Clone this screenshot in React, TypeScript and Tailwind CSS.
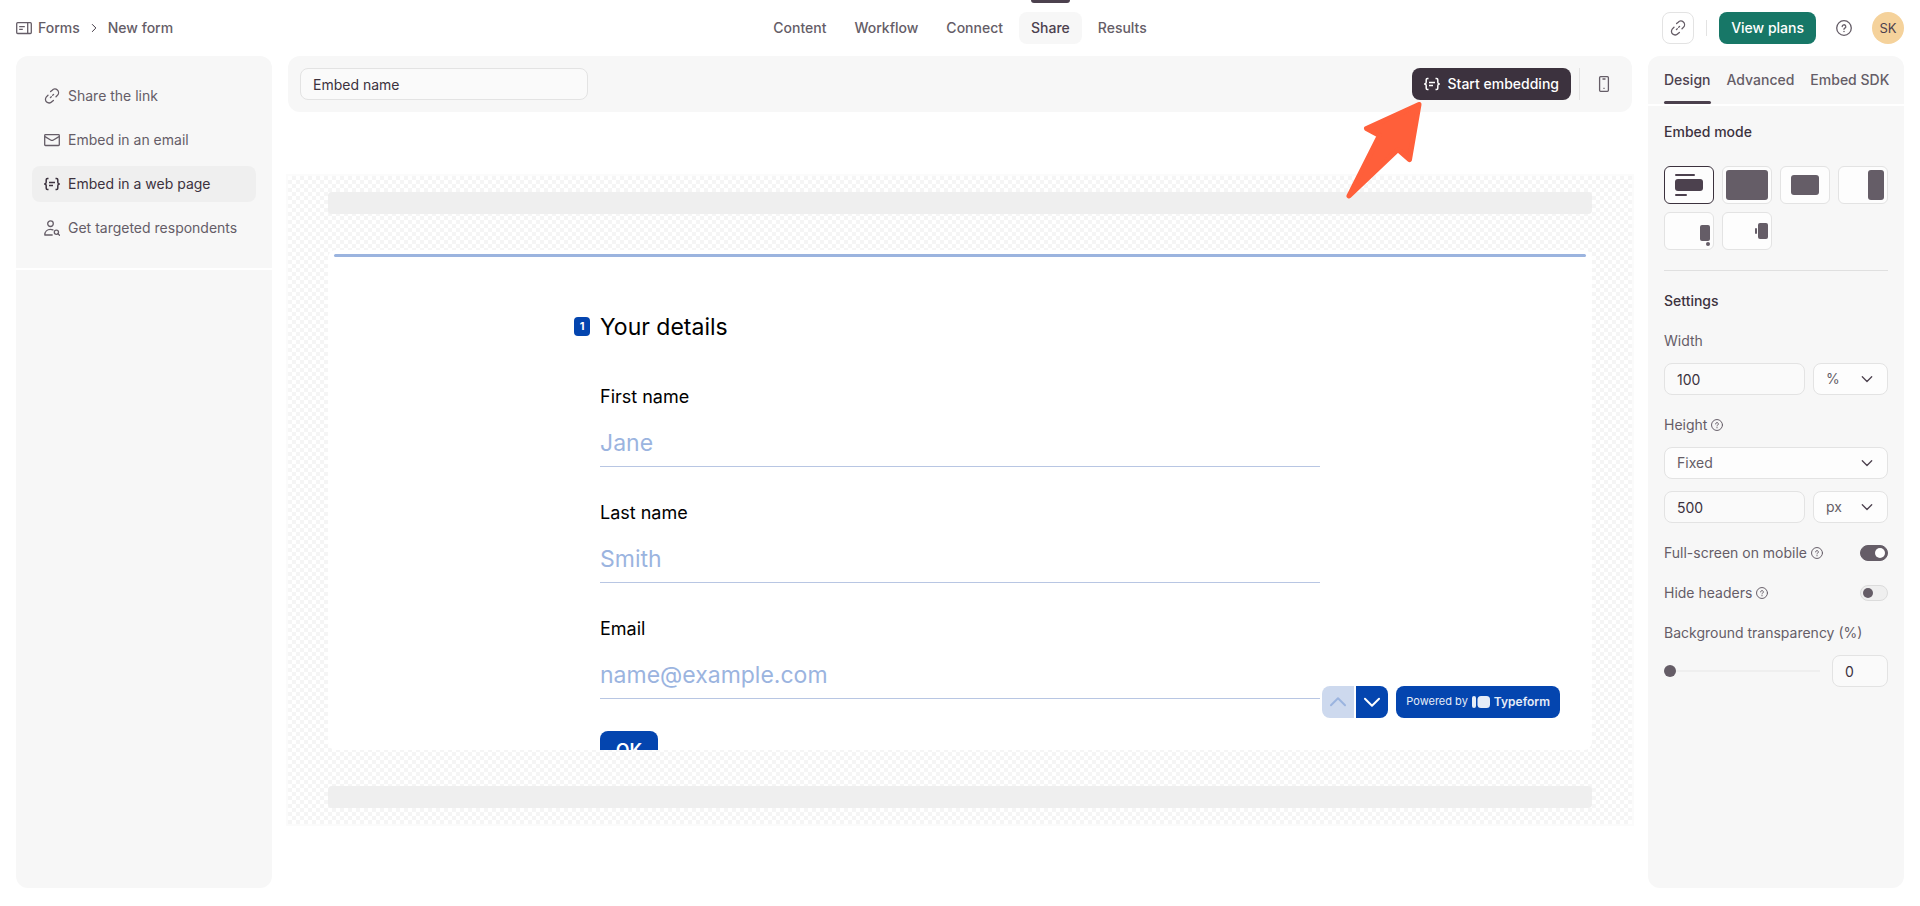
import { ReactNode, useState } from "react";

type IconProps = { className?: string };

function LinkIcon({ className = "size-4" }: IconProps) {
  return (
    <svg className={className} viewBox="0 0 16 16" fill="none" stroke="currentColor" strokeWidth="1.3" strokeLinecap="round">
      <path d="M6.6 3.6 8.2 2.2a3.6 3.6 0 0 1 5.4 4.9L12 8.8" />
      <path d="M9.4 12.4 7.8 13.8a3.6 3.6 0 0 1-5.4-4.9L4 7.2" />
      <path d="m9.6 6.4-.9.9M7.3 8.7l-.9.9" />
    </svg>
  );
}

function MailIcon({ className = "size-4" }: IconProps) {
  return (
    <svg className={className} viewBox="0 0 16 16" fill="none" stroke="currentColor" strokeWidth="1.3" strokeLinejoin="round">
      <rect x="0.7" y="2.7" width="14.6" height="10.8" rx="0.8" />
      <path d="M1 4.6 6.6 8a2.7 2.7 0 0 0 2.8 0L15 4.6" />
    </svg>
  );
}

function EmbedIcon({ className = "size-4" }: IconProps) {
  return (
    <svg className={className} viewBox="0 0 16 16" fill="none" stroke="currentColor" strokeWidth="1.5" strokeLinejoin="round">
      <path d="M4.500 2.500H3.400c-.7 0-1.200.5-1.200 1.200v2.600c0 1-.5 1.700-1.700 1.700 1.200 0 1.700.7 1.700 1.700v2.600c0 .7.5 1.200 1.200 1.200h1.100" />
      <path d="M11.500 2.500h1.100c.7 0 1.200.5 1.200 1.200v2.600c0 1 .5 1.700 1.700 1.700-1.200 0-1.700.7-1.700 1.700v2.600c0 .7-.5 1.200-1.200 1.200h-1.100" />
      <path d="M5 6.500h6M5 9.500h4" />
    </svg>
  );
}

function PeopleIcon({ className = "size-4" }: IconProps) {
  return (
    <svg className={className} viewBox="0 0 16 16" fill="none" stroke="currentColor" strokeWidth="1.3" strokeLinecap="round" strokeLinejoin="round">
      <circle cx="6.5" cy="3.7" r="2.8" />
      <path d="M8.2 15H.8c0-3.3 2.4-5.6 5.7-5.6.9 0 1.7.2 2.4.5" />
      <circle cx="12.4" cy="12.2" r="2.1" />
      <path d="m14 13.8 1.5 1.5" />
    </svg>
  );
}

function FormsIcon({ className = "size-4" }: IconProps) {
  return (
    <svg className={className} viewBox="0 0 16 16" fill="none" stroke="currentColor" strokeWidth="1.3">
      <rect x="0.7" y="2.7" width="14.6" height="10.8" rx="1" />
      <path d="M11.7 2.7v10.8M3.2 6.7h5.6M3.2 9.3h3.6" />
    </svg>
  );
}

function HelpIcon({ className = "size-4" }: IconProps) {
  return (
    <svg className={className} viewBox="0 0 16 16" fill="none" stroke="currentColor" strokeWidth="1.3" strokeLinecap="round">
      <circle cx="8" cy="8" r="7.3" />
      <path d="M6.2 6.6a1.8 1.8 0 1 1 2.7 1.5c-.6.4-.9.6-.9 1.2" />
      <path d="M8 11.5v.1" strokeWidth="1.5" />
    </svg>
  );
}

function PhoneIcon({ className = "size-4" }: IconProps) {
  return (
    <svg className={className} viewBox="0 0 16 16" fill="none" stroke="currentColor" strokeWidth="1.3">
      <rect x="3.6" y="0.7" width="8.8" height="14.6" rx="1" />
      <path d="M6.5 3h3M7.4 12.3h1.2" />
    </svg>
  );
}

function Chevron({ className = "size-4" }: IconProps) {
  return (
    <svg className={className} viewBox="0 0 16 16" fill="none" stroke="currentColor" strokeWidth="1.3" strokeLinecap="round" strokeLinejoin="round">
      <path d="M3.3 5.8 8 10.5l4.7-4.7" />
    </svg>
  );
}

const navItems = ["Content", "Workflow", "Connect", "Share", "Results"];

const shareOptions = [
  { label: "Share the link", icon: LinkIcon },
  { label: "Embed in an email", icon: MailIcon },
  { label: "Embed in a web page", icon: EmbedIcon },
  { label: "Get targeted respondents", icon: PeopleIcon },
];

const fields = [
  { id: "first-name", label: "First name", placeholder: "Jane", type: "text" },
  { id: "last-name", label: "Last name", placeholder: "Smith", type: "text" },
  { id: "email", label: "Email", placeholder: "name@example.com", type: "email" },
];

const embedModes = [
  {
    name: "Standard",
    art: (
      <g fill="#4c414e">
        <rect x="10" y="7" width="20" height="2" rx="1" />
        <rect x="10" y="12" width="28" height="12" rx="3" />
        <rect x="10" y="27" width="12" height="2" rx="1" />
      </g>
    ),
  },
  { name: "Full-page", art: <rect x="3" y="3" width="42" height="30" rx="3" /> },
  { name: "Popup", art: <rect x="10" y="8" width="28" height="20" rx="3" /> },
  { name: "Slider", art: <rect x="29" y="3" width="16" height="30" rx="3" /> },
  {
    name: "Popover",
    art: (
      <>
        <rect x="35" y="12" width="10" height="16" rx="2" />
        <circle cx="43" cy="31" r="2" />
      </>
    ),
  },
  {
    name: "Side tab",
    art: (
      <>
        <rect x="32" y="15" width="2" height="6" rx="1" />
        <rect x="35" y="10" width="10" height="16" rx="2" />
      </>
    ),
  },
];

const inputStyle =
  "h-8 w-full min-w-0 rounded-lg border border-[#e3e3e3] bg-[#fafafa] px-3 text-sm text-[#3c323e] outline-none";

function Select({ label, id, options, className = "" }: { label: string; id: string; options: string[]; className?: string }) {
  return (
    <div className={`relative ${className}`}>
      <select
        id={id}
        aria-label={label}
        className="h-8 w-full appearance-none rounded-lg border border-[#e3e3e3] bg-[#fdfdfd] px-3 text-sm text-[#655d67] outline-none"
      >
        {options.map((option) => (
          <option key={option}>{option}</option>
        ))}
      </select>
      <Chevron className="pointer-events-none absolute top-2 right-[13px] size-4 text-[#4c414e]" />
    </div>
  );
}

function Toggle({ label, defaultChecked = false }: { label: string; defaultChecked?: boolean }) {
  return (
    <label className="flex h-4 items-center justify-between">
      <span className="flex items-center gap-1">
        {label}
        <HelpIcon className="size-3" />
      </span>
      <input type="checkbox" role="switch" defaultChecked={defaultChecked} className="peer sr-only" />
      <span className="flex h-4 w-7 items-center rounded-full border border-[#dcdcdc] bg-[#efefef] px-0.5 peer-checked:justify-end peer-checked:border-[#655d67] peer-checked:bg-[#655d67] peer-checked:*:bg-white">
        <span className="size-2.5 rounded-full bg-[#655d67]" />
      </span>
    </label>
  );
}

function Header() {
  return (
    <header className="flex h-14 shrink-0 items-center px-4 font-medium">
      <nav aria-label="Breadcrumb" className="flex flex-1 items-center gap-1.5">
        <FormsIcon />
        <a href="#forms">Forms</a>
        <Chevron className="mx-0.5 size-3 -rotate-90 text-[#3c323e]" />
        <a href="#new-form">New form</a>
      </nav>

      <nav aria-label="Form" className="flex h-full items-center gap-1">
        {navItems.map((item) => (
          <a
            key={item}
            href={`#${item.toLowerCase()}`}
            className={`relative flex h-8 items-center rounded-lg px-3 ${
              item === "Share" ? "bg-[#f7f7f7] text-[#4c414e]" : ""
            }`}
          >
            {item}
            {item === "Share" && <span className="absolute inset-x-3 -top-3 h-[3px] rounded-b-sm bg-[#4c414e]" />}
          </a>
        ))}
      </nav>

      <div className="flex flex-1 items-center justify-end gap-3">
        <button aria-label="Copy link" className="flex size-8 items-center justify-center rounded-lg border border-[#e3e3e3]">
          <LinkIcon />
        </button>
        <span className="h-4 w-px bg-[#e3e3e3]" />
        <button className="h-8 rounded-lg bg-[#177767] px-3 text-white">View plans</button>
        <button aria-label="Help" className="flex size-8 items-center justify-center">
          <HelpIcon />
        </button>
        <button aria-label="Account" className="size-8 rounded-full bg-[#f5d29b] text-[13px] font-normal text-[#4c414e]">
          SK
        </button>
      </div>
    </header>
  );
}

function Sidebar() {
  return (
    <aside className="flex w-64 shrink-0 flex-col gap-0.5">
      <nav aria-label="Share options" className="flex h-53 flex-col gap-2 rounded-t-xl bg-[#f7f7f7] px-4 pt-[22px]">
        {shareOptions.map(({ label, icon: Icon }, index) => (
          <a
            key={label}
            href="#share"
            className={`flex h-9 shrink-0 items-center gap-2 rounded-lg px-3 ${
              index === 2 ? "bg-[#efefef] text-[#3c323e]" : ""
            }`}
          >
            <Icon />
            {label}
          </a>
        ))}
      </nav>
      <div className="flex-1 rounded-b-xl bg-[#f7f7f7]" />
    </aside>
  );
}

function FormPreview() {
  return (
    <div className="relative h-[500px] overflow-hidden rounded-lg bg-white px-1.5 pt-1 text-black">
      <div className="h-[3px] rounded-full bg-[#9bb4df]" />
      <form className="mx-auto flex w-full max-w-[720px] flex-col pt-13" onSubmit={(e) => e.preventDefault()}>
        <div className="relative">
          <span className="absolute top-2 right-full mr-2.5 flex h-[19px] w-4 items-center justify-center rounded bg-[#0445af] text-[11px] font-bold text-white">
            1
          </span>
          <h1 className="text-[23px] leading-9">Your details</h1>
        </div>
        <div className="mt-[38px] flex flex-col gap-8">
          {fields.map((field) => (
            <div key={field.id}>
              <label htmlFor={field.id} className="block text-lg leading-7">
                {field.label}
              </label>
              <input
                id={field.id}
                type={field.type}
                placeholder={field.placeholder}
                className="mt-2 block h-12 w-full border-b border-[#b8c6e3] bg-transparent text-[23px] outline-none placeholder:text-[#9bb4df]"
              />
            </div>
          ))}
        </div>
        <button className="mt-8 h-10 w-[58px] shrink-0 rounded-lg bg-[#0445af] text-lg font-semibold text-white">OK</button>
      </form>

      <div className="absolute right-8 bottom-8 flex gap-2 text-white">
        <div className="flex gap-0.5 bg-white">
          <button aria-label="Previous question" disabled className="flex size-8 items-center justify-center rounded-l-lg bg-[#cdd9ee] text-[#9bb4df]">
            <Chevron className="size-6 rotate-180" />
          </button>
          <button aria-label="Next question" className="flex size-8 items-center justify-center rounded-r-lg bg-[#0445af]">
            <Chevron className="size-6" />
          </button>
        </div>
        <a href="#typeform" className="flex h-8 items-center gap-1 rounded-lg bg-[#0445af] px-2.5 text-[11px] text-[#e6ecf7]">
          Powered by
          <svg className="h-3 w-[18px]" viewBox="0 0 18 12" fill="currentColor">
            <rect width="4" height="12" rx="2" />
            <rect x="5.5" width="12.5" height="12" rx="3.5" />
          </svg>
          <span className="text-xs font-semibold">Typeform</span>
        </a>
      </div>
    </div>
  );
}

function Preview() {
  return (
    <main className="min-w-0 flex-1">
      <div className="flex h-14 items-center justify-between rounded-xl bg-[#f7f7f7] px-3">
        <input aria-label="Embed name" defaultValue="Embed name" className="h-8 w-72 rounded-lg border border-[#e3e3e3] bg-[#fafafa] px-3 text-[#3c323e] outline-none" />
        <div className="relative flex items-center gap-2">
          <button className="flex h-8 items-center gap-2 rounded-lg bg-[#3c323e] px-3 font-medium text-white">
            <EmbedIcon />
            Start embedding
          </button>
          <span className="h-8 w-px bg-[#e3e3e3]" />
          <button aria-label="Mobile preview" className="flex size-8 items-center justify-center">
            <PhoneIcon />
          </button>
          <svg
            className="pointer-events-none absolute top-8 right-49 h-[100px] w-20"
            viewBox="0 0 80 100"
            fill="#ff5f3a"
            stroke="#ff5f3a"
            strokeWidth="5"
            strokeLinejoin="round"
          >
            <path d="M75 4.5 22.5 28.5 35.5 35.5 5 96 54 49.5 65.5 59.5Z" />
          </svg>
        </div>
      </div>

      <div className="-mx-0.5 mt-[62px] border-2 border-[#fbfbfb] bg-[repeating-conic-gradient(#f5f5f5_0_25%,#ffffff_0_50%)] bg-size-[8px_8px] px-10 py-4">
        <div className="h-[22px] rounded bg-[#efefef]" />
        <div className="my-9">
          <FormPreview />
        </div>
        <div className="h-[22px] rounded bg-[#efefef]" />
      </div>
    </main>
  );
}

function Section({ title, children }: { title: string; children: ReactNode }) {
  return (
    <section>
      <h2 className="font-medium text-[#3c323e]">{title}</h2>
      {children}
    </section>
  );
}

function SettingsPanel() {
  const [mode, setMode] = useState("Standard");

  return (
    <aside className="flex w-64 shrink-0 flex-col gap-0.5">
      <div role="tablist" className="flex h-12 gap-4 rounded-t-xl bg-[#f7f7f7] px-4 font-medium whitespace-nowrap">
        <button role="tab" aria-selected="true" className="relative text-[#4c414e]">
          Design
          <span className="absolute inset-x-0 bottom-0 h-[3px] rounded-full bg-[#4c414e]" />
        </button>
        <button role="tab">Advanced</button>
        <button role="tab">Embed SDK</button>
      </div>

      <div className="flex-1 rounded-b-xl bg-[#f7f7f7] px-4 pt-4">
        <Section title="Embed mode">
          <div className="mt-6 grid grid-cols-4 gap-2">
            {embedModes.map(({ name, art }) => (
              <button
                key={name}
                aria-label={name}
                onClick={() => setMode(name)}
                className={`h-[38px] rounded-md border bg-[#fdfdfd] ${mode === name ? "border-[#3c323e]" : "border-[#e3e3e3]"}`}
              >
                <svg className="mx-auto h-9 w-12" viewBox="0 0 48 36" fill="#655d67">
                  {art}
                </svg>
              </button>
            ))}
          </div>
        </Section>

        <hr className="my-5 border-[#e0e0e0]" />

        <Section title="Settings">
          <label htmlFor="width" className="mt-5 block">
            Width
          </label>
          <div className="mt-3 flex gap-2">
            <input id="width" defaultValue="100" className={inputStyle} />
            <Select id="width-unit" label="Width unit" options={["%", "px"]} className="w-[75px] shrink-0" />
          </div>

          <label htmlFor="height-mode" className="mt-5 flex items-center gap-1">
            Height
            <HelpIcon className="size-3" />
          </label>
          <Select id="height-mode" label="Height" options={["Fixed", "Dynamic"]} className="mt-3" />
          <div className="mt-3 flex gap-2">
            <input aria-label="Height value" defaultValue="500" className={inputStyle} />
            <Select id="height-unit" label="Height unit" options={["px", "%"]} className="w-[75px] shrink-0" />
          </div>

          <div className="mt-[22px] flex flex-col gap-6">
            <Toggle label="Full-screen on mobile" defaultChecked />
            <Toggle label="Hide headers" />
          </div>

          <label htmlFor="transparency" className="mt-[22px] block">
            Background transparency (%)
          </label>
          <div className="mt-3 flex items-center gap-3">
            <input
              id="transparency"
              type="range"
              defaultValue="0"
              className="h-3 min-w-0 flex-1 appearance-none bg-transparent [&::-webkit-slider-runnable-track]:h-0.5 [&::-webkit-slider-runnable-track]:bg-[#efefef] [&::-webkit-slider-thumb]:-mt-[5px] [&::-webkit-slider-thumb]:size-3 [&::-webkit-slider-thumb]:appearance-none [&::-webkit-slider-thumb]:rounded-full [&::-webkit-slider-thumb]:bg-[#655d67]"
            />
            <div className="w-14">
              <input aria-label="Background transparency value" defaultValue="0" className={inputStyle} />
            </div>
          </div>
        </Section>
      </div>
    </aside>
  );
}

export default function App() {
  return (
    <div className="flex min-h-screen flex-col bg-white font-[Inter,sans-serif] text-sm text-[#655d67]">
      <Header />
      <div className="flex flex-1 gap-4 px-4 pb-[18px]">
        <Sidebar />
        <Preview />
        <SettingsPanel />
      </div>
    </div>
  );
}
